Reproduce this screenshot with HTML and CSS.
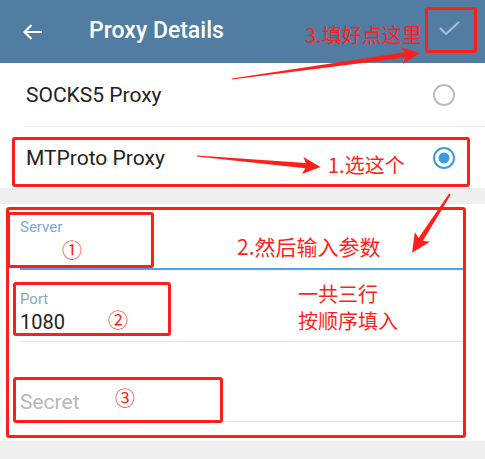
FILE: index.html
```html
<!DOCTYPE html>
<html lang="zh">
<head>
    <meta charset="UTF-8">
    <meta name="viewport" content="width=device-width, initial-scale=1.0">
    <title>Proxy Details</title>
    <link rel="stylesheet" href="styles.css">
</head>
<body>

<div class="screen">
    <div class="header">
        <svg class="back" width="20" height="16" viewBox="0 0 20 16">
            <path d="M1 8 H19 M8.5 1 L1.5 8 L8.5 15" fill="none" stroke="#fff" stroke-width="2.2"/>
        </svg>
        <div class="title">Proxy Details</div>
        <svg class="done" width="21" height="14" viewBox="0 0 21 14">
            <polyline points="1,7 7,13 20,1" fill="none" stroke="#a9c0d4" stroke-width="2"/>
        </svg>
    </div>

    <div class="types">
        <div class="type-row">
            <span>SOCKS5 Proxy</span>
            <span class="radio"></span>
        </div>
        <div class="divider"></div>
        <div class="type-row">
            <span>MTProto Proxy</span>
            <span class="radio checked"></span>
        </div>
    </div>

    <div class="gap"></div>

    <div class="fields">
        <div class="field field-server">
            <div class="field-label focused">Server</div>
            <div class="field-input active"></div>
        </div>
        <div class="field field-port">
            <div class="field-label">Port</div>
            <div class="field-input">1080</div>
        </div>
        <div class="field field-secret">
            <div class="field-label"></div>
            <div class="field-input placeholder">Secret</div>
        </div>
    </div>

    <!-- annotations drawn over the screenshot -->
    <div class="notes">
        <div class="mark mark-done"></div>
        <div class="mark mark-type"></div>
        <div class="mark mark-fields"></div>
        <div class="mark mark-server"></div>
        <div class="mark mark-port"></div>
        <div class="mark mark-secret"></div>

        <svg class="arrows" width="485" height="459" viewBox="0 0 485 459">
            <g transform="translate(232,79) rotate(-7.9)">
                <polygon points="0,-0.6 175,-2.6 171,-8.5 190,0 171,8.5 175,2.6 0,0.6"/>
            </g>
            <g transform="translate(197,156) rotate(5.1)">
                <polygon points="0,-0.6 109,-2.6 106,-8.5 124,0 106,8.5 109,2.6 0,0.6"/>
            </g>
            <g transform="translate(450,194) rotate(122.8)">
                <polygon points="0,-1 54,-2.6 51,-9 70,0 51,9 54,2.6 0,1"/>
            </g>
        </svg>

        <div class="note note-done">3.填好点这里</div>
        <div class="note note-type">1.选这个</div>
        <div class="note note-fields">2.然后输入参数</div>
        <div class="note note-rows">一共三行</div>
        <div class="note note-order">按顺序填入</div>
        <div class="note num num-1">①</div>
        <div class="note num num-2">②</div>
        <div class="note num num-3">③</div>
    </div>
</div>

</body>
</html>
```

FILE: styles.css
```css
body {
    margin: 0;
    font-family: Roboto, 'Noto Sans', sans-serif;
    background: #efefef;
    color: #222;
}
.screen {
    position: relative;
    width: 485px;
    height: 459px;
    overflow: hidden;
}
.header {
    height: 63px;
    background: #517da2;
    display: flex;
    align-items: center;
}
.back {
    margin-left: 23px;
}
.title {
    margin-left: 46px;
    font-size: 23px;
    font-weight: 500;
    color: #fff;
    padding-bottom: 3px;
}
.done {
    margin-left: auto;
    margin-right: 25px;
    margin-bottom: 8px;
}
.types {
    background: #fff;
}
.type-row {
    height: 63px;
    display: flex;
    align-items: center;
    justify-content: space-between;
    padding: 0 30px 0 26px;
    font-size: 21px;
    color: #222;
}
.type-row + .divider + .type-row {
    height: 61px;
}
.divider {
    height: 1px;
    margin-left: 24px;
    background: #e8e8e8;
}
.radio {
    width: 22px;
    height: 22px;
    box-sizing: border-box;
    border-radius: 50%;
    border: 2px solid #bdbdbd;
}
.radio.checked {
    border: 2.5px solid #3a9de2;
    background: radial-gradient(circle, #3a9de2 5px, transparent 5.8px);
}
.gap {
    height: 16px;
}
.fields {
    background: #fff;
    padding: 0 21px 19px 20px;
}
.field-server {
    padding-top: 14px;
}
.field-port {
    padding-top: 20px;
}
.field-secret {
    padding-top: 28px;
}
.field-label {
    height: 18px;
    line-height: 18px;
    font-size: 15px;
    color: #8ea8be;
}
.field-label.focused {
    color: #79a8d0;
}
.field-input {
    height: 34px;
    box-sizing: border-box;
    padding-top: 2px;
    line-height: 24px;
    font-size: 20px;
    color: #222;
    border-bottom: 1px solid #e4e4e4;
}
.field-input.active {
    border-bottom: 2px solid #4ea4e6;
}
.field-input.placeholder {
    font-size: 21px;
    color: #b8b8b8;
}

/* annotations */
.notes {
    position: absolute;
    top: 0;
    left: 0;
    width: 485px;
    height: 459px;
    pointer-events: none;
}
.arrows {
    position: absolute;
    top: 0;
    left: 0;
    fill: #ff1f1a;
}
.mark {
    position: absolute;
    box-sizing: border-box;
    border: 3px solid #ff1f1a;
    border-radius: 3px;
}
.mark-done { left: 425px; top: 7px; width: 52px; height: 46px; }
.mark-type { left: 12px; top: 137px; width: 458px; height: 50px; }
.mark-fields { left: 6px; top: 207px; width: 460px; height: 231px; }
.mark-server { left: 7px; top: 212px; width: 147px; height: 56px; }
.mark-port { left: 13px; top: 282px; width: 158px; height: 54px; }
.mark-secret { left: 13px; top: 377px; width: 210px; height: 46px; }

.note {
    position: absolute;
    font-family: 'Noto Sans CJK SC', sans-serif;
    font-size: 20px;
    line-height: 20px;
    color: #ff1f1a;
    white-space: nowrap;
}
.note-done { left: 305px; top: 25px; }
.note-type { left: 328px; top: 155px; }
.note-fields { left: 237px; top: 236px; font-size: 21px; line-height: 21px; }
.note-rows { left: 298px; top: 284px; }
.note-order { left: 298px; top: 311px; }
.num-1 { left: 62px; top: 240px; }
.num-2 { left: 108px; top: 310px; }
.num-3 { left: 115px; top: 388px; }
```
